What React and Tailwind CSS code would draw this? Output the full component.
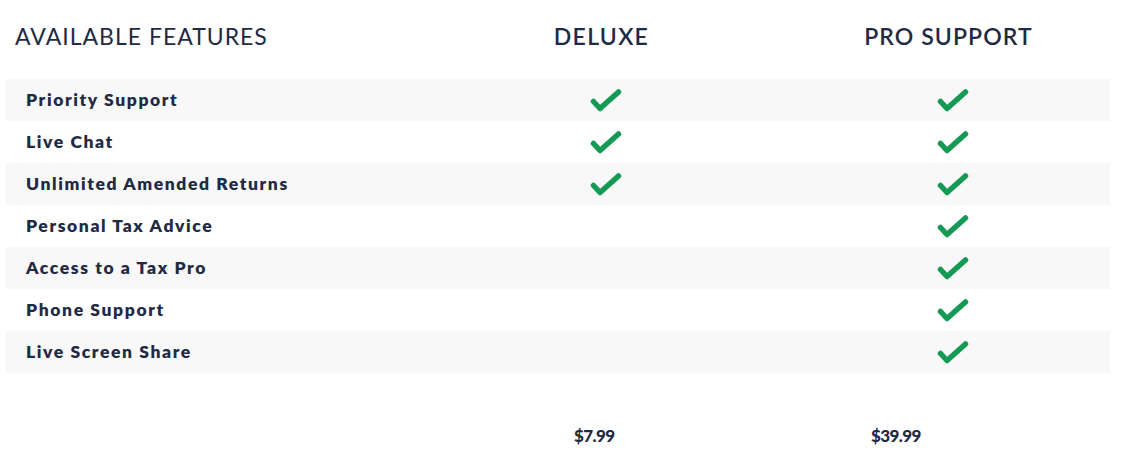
import React from "react";

const features = [
  { name: "Priority Support", deluxe: true, pro: true },
  { name: "Live Chat", deluxe: true, pro: true },
  { name: "Unlimited Amended Returns", deluxe: true, pro: true },
  { name: "Personal Tax Advice", deluxe: false, pro: true },
  { name: "Access to a Tax Pro", deluxe: false, pro: true },
  { name: "Phone Support", deluxe: false, pro: true },
  { name: "Live Screen Share", deluxe: false, pro: true },
];

const Check = () => (
  <svg width="32" height="24" viewBox="0 0 32 24" fill="none">
    <path
      d="M3.5 13.5L10 20.5L28.5 4"
      stroke="#149a55"
      strokeWidth="5.5"
      strokeLinecap="round"
      strokeLinejoin="round"
    />
  </svg>
);

const App = () => {
  return (
    <div className="w-[1124px] h-[463px] bg-white text-[#1f2a44] font-['Lato',sans-serif]">
      {/* header */}
      <div className="flex h-[72px] items-center">
        <div className="w-[428px] pl-[15px] text-[23px] font-normal tracking-[1px]">
          AVAILABLE FEATURES
        </div>
        <div className="w-[347px] text-center text-[23px] font-semibold tracking-[1.3px]">
          DELUXE
        </div>
        <div className="w-[347px] text-center text-[23px] font-semibold tracking-[1.1px]">
          PRO SUPPORT
        </div>
      </div>

      {/* feature rows */}
      <div className="ml-[6px] mt-[7px] w-[1104px]">
        {features.map((f, i) => (
          <div
            key={f.name}
            className={`flex h-[42px] items-center ${i % 2 === 0 ? "bg-[#f8f8f8]" : "bg-white"}`}
          >
            <div className="w-[422px] pl-[20px] text-[17.5px] font-extrabold tracking-[1.6px]">
              {f.name}
            </div>
            <div className="w-[347px] pl-[162px] flex items-center">
              {f.deluxe && <Check />}
            </div>
            <div className="flex-1 pl-[162px] flex items-center">
              {f.pro && <Check />}
            </div>
          </div>
        ))}
      </div>

      {/* prices */}
      <div className="ml-[6px] mt-[51px] flex h-[24px] items-center w-[1104px]">
        <div className="w-[422px]"></div>
        <div className="w-[347px] pl-[146px] text-[17px] font-black tracking-[-0.6px]">$7.99</div>
        <div className="flex-1 pl-[96px] text-[17px] font-black tracking-[-0.6px]">$39.99</div>
      </div>
    </div>
  );
};

export default App;
